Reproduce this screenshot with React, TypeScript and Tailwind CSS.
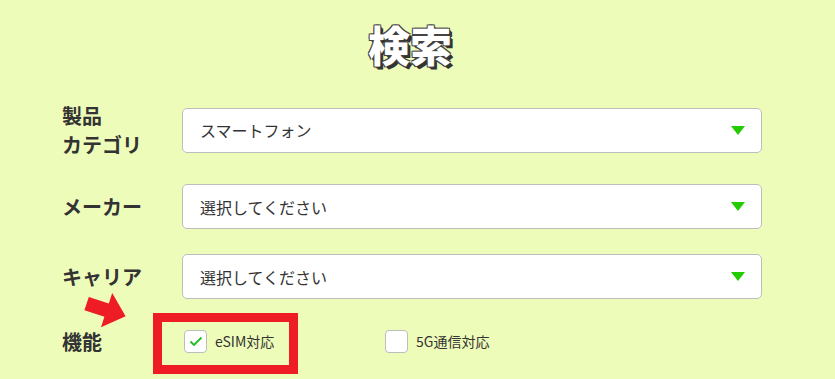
import React from "react";

const font = { fontFamily: '"Noto Sans CJK JP", "Noto Sans", sans-serif' };

function Select({ value }: { value: string }) {
  return (
    <div className="relative flex h-[45px] w-[580px] items-center rounded-[5px] border border-[#bdbdbd] bg-white pl-[17px] text-[16px] text-[#333]">
      <span>{value}</span>
      <svg className="absolute right-[16px] top-[17px]" width="14" height="9" viewBox="0 0 14 9">
        <polygon points="0,0 14,0 7,9" fill="#22cc00" />
      </svg>
    </div>
  );
}

function Check({ checked, label }: { checked?: boolean; label: string }) {
  return (
    <div className="flex items-center gap-[8px]">
      <div className="flex h-[23px] w-[23px] items-center justify-center rounded-[4px] border border-[#bdbdbd] bg-white">
        {checked && (
          <svg width="14" height="11" viewBox="0 0 14 11">
            <polyline points="1.5,5.5 5,9 12.5,1.5" fill="none" stroke="#22bb22" strokeWidth="1.8" />
          </svg>
        )}
      </div>
      <span className="text-[14px] text-[#333]">{label}</span>
    </div>
  );
}

export default function App() {
  return (
    <div className="relative h-[379px] w-[835px] overflow-hidden bg-[#eefcb9]" style={font}>
      <div className="flex justify-center pt-[17px] pr-[15px]">
        <h1 className="text-[42px] font-black leading-[54px] text-white [text-shadow:-1px_-1px_0_#444,1px_-1px_0_#444,-1px_1px_0_#444,1px_1px_0_#333,2px_2px_0_#333,3px_3px_0_#333]">
          検索
        </h1>
      </div>

      <div className="mt-[30px] flex flex-col gap-[25px] pl-[62px]">
        <div className="flex items-center">
          <div className="w-[120px] text-[20px] font-bold leading-[29px] text-[#333]">
            製品
            <br />
            カテゴリ
          </div>
          <Select value="スマートフォン" />
        </div>
        <div className="flex items-center">
          <div className="w-[120px] text-[20px] font-bold text-[#333]">メーカー</div>
          <Select value="選択してください" />
        </div>
        <div className="flex items-center">
          <div className="w-[120px] text-[20px] font-bold text-[#333]">キャリア</div>
          <Select value="選択してください" />
        </div>
      </div>

      <div className="relative mt-[28px] flex items-center pl-[62px]">
        <div className="w-[122px] text-[20px] font-bold leading-[29px] text-[#333]">機能</div>
        <div className="flex">
          <div className="w-[201px]">
            <Check checked label="eSIM対応" />
          </div>
          <Check label="5G通信対応" />
        </div>
        <div className="pointer-events-none absolute left-[153px] top-[-14px] h-[61px] w-[145px] border-[9px] border-[#ee1c24]" />
      </div>

      <svg className="absolute left-[75px] top-[285px]" width="60" height="50" viewBox="0 0 60 50">
        <polygon
          points="13.8,11.9 33.8,18.4 37.2,8 50.6,31.3 26,42.2 29.4,31.8 9.4,25.3"
          fill="#ee1c24"
        />
      </svg>
    </div>
  );
}
